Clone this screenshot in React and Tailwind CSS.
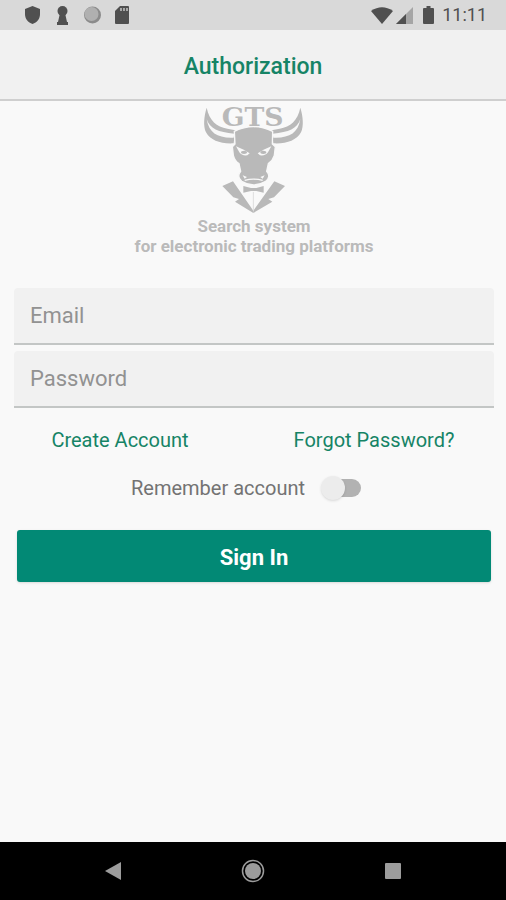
import { useState } from "react"

function StatusBar() {
  return (
    <div className="flex h-[30px] items-center justify-between bg-[#d9d9d9] pl-[24px] pr-[19px] text-[#505050]">
      <div className="flex items-center gap-[13px]">
        <svg className="h-[18px] w-[17px]" viewBox="0 0 17 18" fill="currentColor">
          <path d="M8.500 0 L16 3 V8 C16 13 13 16.500 8.500 18 C4 16.500 1 13 1 8 V3 Z" />
        </svg>
        <svg className="h-[19px] w-[17px]" viewBox="0 0 17 19" fill="currentColor">
          <circle cx="8.500" cy="5" r="5" />
          <path d="M6 7 H11 L13 16 H14 V19 H3 V16 H4 Z" />
        </svg>
        <svg className="h-[18px] w-[17px]" viewBox="0 0 17 18">
          <circle cx="8.500" cy="9" r="8.500" fill="#8b8b8b" />
          <circle cx="7.500" cy="8" r="7" fill="#b0b0b0" />
        </svg>
        <svg className="h-[18px] w-[17px]" viewBox="0 0 17 18" fill="currentColor">
          <path d="M6 0 H14 Q15 0 15 1 V17 Q15 18 14 18 H2 Q1 18 1 17 V5 Z" />
          <path d="M6 2 H8 V5 H6 Z M9 2 H11 V5 H9 Z M12 2 H14 V5 H12 Z" fill="#a8a8a8" />
        </svg>
      </div>
      <div className="flex items-center">
        <svg className="h-[17px] w-[22px]" viewBox="0 0 22 17" fill="currentColor">
          <path d="M0 4 Q11 -3.500 22 4 L11 17 Z" />
        </svg>
        <svg className="ml-[3px] h-[17px] w-[17px]" viewBox="0 0 17 17">
          <path d="M0 17 L17 0 V17 Z" fill="#a5a5a5" />
          <path d="M0 17 L10 7 V17 Z" fill="#505050" />
        </svg>
        <svg className="ml-[10px] h-[18px] w-[11px]" viewBox="0 0 11 18" fill="currentColor">
          <path d="M3.500 0 H7.500 V2 H10 Q11 2 11 3 V17 Q11 18 10 18 H1 Q0 18 0 17 V3 Q0 2 1 2 H3.500 Z" />
        </svg>
        <span className="ml-2 text-[18px] leading-6">11:11</span>
      </div>
    </div>
  )
}

function Logo() {
  return (
    <svg className="h-[108px] w-[102px] overflow-visible" viewBox="39 27 306 324" fill="#b9b9b9" role="img" aria-label="GTS">
      <text x="188" y="85" textAnchor="middle" fontFamily="DejaVu Serif, serif" fontWeight="700" fontSize="80">GTS</text>
      {/* horns */}
      <path d="M50 29 C58 68 80 86 112 92 L136 97 L131 136 C92 138 62 128 48 103 C39 84 42 55 50 29 Z" />
      <path d="M331 29 C323 68 301 86 269 92 L245 97 L250 136 C289 138 319 128 333 103 C342 84 339 55 331 29 Z" />
      <path d="M50 64 C60 92 84 103 133 107 L131 119 C84 121 57 106 50 64 Z" fill="#f8f8f8" />
      <path d="M331 64 C321 92 297 103 248 107 L250 119 C297 121 324 106 331 64 Z" fill="#f8f8f8" />
      {/* head */}
      <path
        d="M133 100 Q190 72 248 100 L247 138 L256 146 L253 172 Q248 188 235 197 L230 220 Q244 236 227 250 Q191 272 155 250 Q139 236 152 220 L147 197 Q134 188 130 172 L127 146 L135 138 Z"
        stroke="#f8f8f8"
        strokeWidth="4"
      />
      <path d="M138 145 L158 154 L179 166 L172 172 Q155 174 148 163 Z" fill="#f8f8f8" />
      <path d="M244 145 L224 154 L203 166 L210 172 Q227 174 234 163 Z" fill="#f8f8f8" />
      <ellipse cx="162" cy="163" rx="9" ry="5" />
      <ellipse cx="220" cy="163" rx="9" ry="5" />
      <path d="M158 232 L171 237 L164 242 Z M224 232 L211 237 L218 242 Z" fill="#f8f8f8" />
      <path d="M164 247 Q191 240 218 247" fill="none" stroke="#f8f8f8" strokeWidth="4" />
      {/* suit */}
      <path d="M97 264 L129 250 L190 338 V345 L135 311 L147 303 L130 298 Z" />
      <path d="M285 264 L253 250 L190 338 V345 L247 311 L235 303 L252 298 Z" />
      <path d="M160 264 L183 270 H199 L221 264 V284 L199 279 H183 L160 284 Z" />
      <path d="M190 282 V338" stroke="#dedede" strokeWidth="3" />
    </svg>
  )
}

function Field({ label, type }) {
  return (
    <input
      type={type}
      aria-label={label}
      placeholder={label}
      className="block h-[57px] w-full rounded-t-sm border-b-2 border-[#c3c6c5] bg-[#f1f1f1] px-4 text-[22px] text-[#555] outline-none placeholder:text-[#929292]"
    />
  )
}

function NavBar() {
  return (
    <nav className="flex h-[58px] items-center justify-around bg-black px-[42px] text-[#9c9c9c]">
      <button aria-label="Back">
        <svg className="h-6 w-6" viewBox="0 0 24 24" fill="currentColor">
          <path d="M5 12 L21 3 V21 Z" />
        </svg>
      </button>
      <button aria-label="Home">
        <svg className="h-6 w-6" viewBox="0 0 24 24" fill="currentColor">
          <circle cx="12" cy="12" r="8" />
          <circle cx="12" cy="12" r="10.500" fill="none" stroke="currentColor" strokeWidth="1.500" />
        </svg>
      </button>
      <button aria-label="Overview">
        <svg className="h-6 w-6" viewBox="0 0 24 24" fill="currentColor">
          <rect x="3" y="4" width="16" height="16" rx="1" />
        </svg>
      </button>
    </nav>
  )
}

export default function App() {
  const [remember, setRemember] = useState(false)

  return (
    <div className="flex min-h-screen flex-col bg-[#f9f9f9] font-[Roboto,sans-serif]">
      <StatusBar />
      <header className="flex h-[71px] items-center justify-center border-b-2 border-[#cfcfcf] bg-[#f1f1f1] pt-[5px]">
        <h1 className="text-[23px] font-medium text-[#168466]">Authorization</h1>
      </header>

      <main className="flex-1 pl-[14px] pr-3 pt-[6px]">
        <div className="flex flex-col items-center">
          <Logo />
          <p className="mt-px text-center text-[17px] font-bold leading-5 text-[#bababa]">
            Search system<br />for electronic trading platforms
          </p>
        </div>

        <form onSubmit={(e) => e.preventDefault()}>
          <div className="mt-8 flex flex-col gap-[6px]">
            <Field label="Email" type="email" />
            <Field label="Password" type="password" />
          </div>

          <div className="mt-5 grid grid-cols-2 text-center text-[20px] leading-6 text-[#168466]">
            <a href="#create" className="pr-7">Create Account</a>
            <a href="#forgot">Forgot Password?</a>
          </div>

          <label className="mt-6 flex items-center justify-center gap-4 pr-4 text-[20px] leading-6 text-[#737373]">
            Remember account
            <span className="relative flex h-6 w-10 items-center">
              <input
                type="checkbox"
                role="switch"
                checked={remember}
                onChange={(e) => setRemember(e.target.checked)}
                className="peer ml-1 h-[18px] w-9 appearance-none rounded-full bg-[#b2b2b2] checked:bg-[#80c4b8]"
              />
              <span className="pointer-events-none absolute left-0 size-6 rounded-full bg-[#ececec] shadow peer-checked:left-4" />
            </span>
          </label>

          <div className="mt-[30px] px-[3px]">
            <button className="block h-[52px] w-full rounded-[3px] bg-[#028975] pt-[2px] text-[22px] font-bold text-white shadow-sm">
              Sign In
            </button>
          </div>
        </form>
      </main>

      <NavBar />
    </div>
  )
}
